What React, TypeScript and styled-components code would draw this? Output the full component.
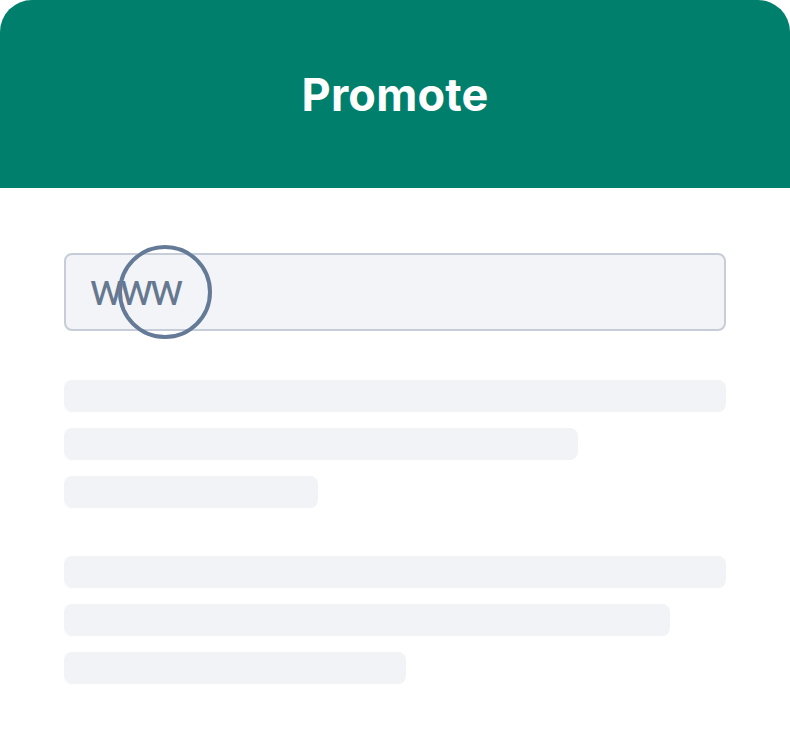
import React from "react";
import styled, { createGlobalStyle } from "styled-components";

const GlobalStyle = createGlobalStyle`
  html, body {
    margin: 0;
    padding: 0;
    background: #ffffff;
  }
  body {
    font-family: Inter, "Noto Sans", "Liberation Sans", sans-serif;
  }
`;

const Page = styled.div`
  width: 790px;
  min-height: 746px;
  background: #ffffff;
`;

const Header = styled.header`
  height: 188px;
  background: #00806c;
  border-radius: 32px 32px 0 0;
  display: flex;
  align-items: center;
  justify-content: center;
`;

const Title = styled.h1`
  margin: 0;
  color: #ffffff;
  font-size: 45px;
  font-weight: 700;
  letter-spacing: 0.2px;
`;

const Content = styled.main`
  padding: 65px 64px 0 64px;
  display: flex;
  flex-direction: column;
`;

const UrlField = styled.div`
  position: relative;
  box-sizing: border-box;
  width: 662px;
  height: 78px;
  border: 2px solid #c6cdd9;
  border-radius: 8px;
  background: #f2f4f7;
  display: flex;
  align-items: center;
  padding-left: 24px;
`;

const UrlText = styled.span`
  font-family: Roboto, "Noto Sans", sans-serif;
  font-weight: 400;
  font-size: 44px;
  line-height: 1;
  letter-spacing: -3px;
  color: #66788f;
  margin-top: -4px;
`;

const Lens = styled.div`
  position: absolute;
  left: 52px;
  top: -10px;
  width: 86px;
  height: 86px;
  border: 4px solid #647a97;
  border-radius: 50%;
`;

const Group = styled.div<{ $top: number }>`
  display: flex;
  flex-direction: column;
  gap: 16px;
  margin-top: ${(p) => p.$top}px;
`;

const Bar = styled.div<{ $width: number }>`
  width: ${(p) => p.$width}px;
  height: 32px;
  border-radius: 8px;
  background: #f2f3f6;
`;

const groups = [
  { top: 49, widths: [662, 514, 254] },
  { top: 48, widths: [662, 606, 342] },
];

export default function App() {
  return (
    <Page>
      <GlobalStyle />
      <Header>
        <Title>Promote</Title>
      </Header>
      <Content>
        <UrlField>
          <UrlText>www</UrlText>
          <Lens />
        </UrlField>
        {groups.map((g, i) => (
          <Group key={i} $top={g.top}>
            {g.widths.map((w, j) => (
              <Bar key={j} $width={w} />
            ))}
          </Group>
        ))}
      </Content>
    </Page>
  );
}
